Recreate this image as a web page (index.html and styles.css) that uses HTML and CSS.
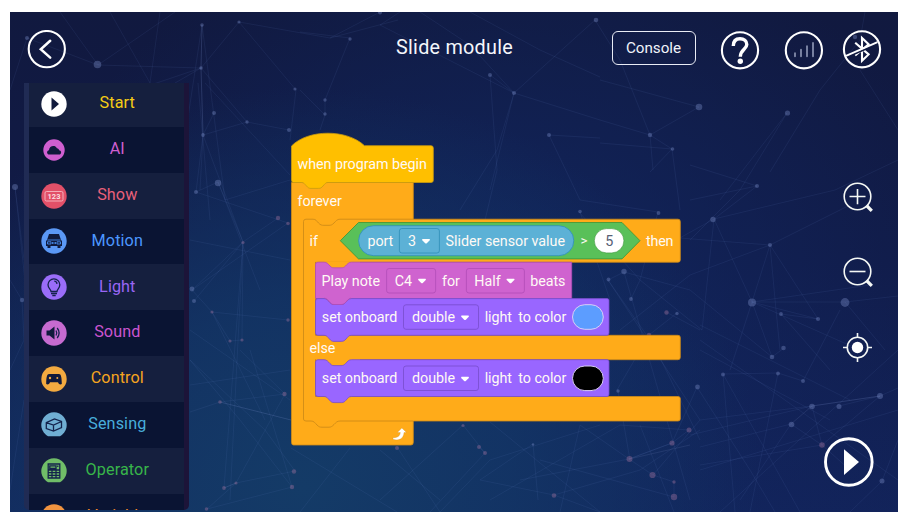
FILE: index.html
```html
<!DOCTYPE html>
<html lang="en">
<head>
<meta charset="utf-8">
<title>Slide module</title>
<link rel="stylesheet" href="styles.css">
</head>
<body>
<div class="app">
  <svg class="mesh" viewBox="10 12 888 500" aria-hidden="true">
    <g class="mesh-lines">
      <path d="M202 25L201 68L203 135L200 190M202 25L180 170M202 25L225 200M239 22L201 68L98 65M239 22L330 38L398 20M239 22L296 90L290 140M201 68L130 92M201 68L175 83M201 68L247 122L289 130M214 113L203 135L247 122M203 135L196 192M196 192L218 182L243 242L192 290M196 192L288 223M203 135L243 242L278 218M218 182L260 290M192 290L212 312L288 320M192 290L288 223M194 301L243 242M212 312L230 341L242 340M212 312L265 420M242 340L243 242M220 402L291 420M220 402L190 412M220 402L285 394L240 350M285 394L236 483M224 488L243 242M224 488L236 483L295 471L265 430L190 360M207 509L236 483M207 509L292 487L240 420L190 360M292 487L250 350M190 385L290 370M243 242L230 500M190 330L290 400M225 200L290 180M190 240L290 260M205 83L290 175M198 83L210 220"/>
      <path d="M330 38L380 12M350 38L325 100L325 115L300 90M350 38L300 32M325 115L320 130M380 25L514 93L600 120M400 12L380 25M420 12L470 45L514 93L490 190M490 75L514 93L595 20M490 75L497 170L485 220M470 12L540 50L600 77M549 135L600 138M549 135L580 200L658 212M514 93L497 150L460 210M595 20L620 60L650 135L699 107L600 80M650 135L600 120M650 135L672 149L650 172M650 135L653 170M672 149L600 143M672 149L680 210M787 113L740 190L690 240M787 113L720 200M860 40L820 90L770 172M860 70L898 130M860 40L865 12"/>
      <path d="M757 186L690 165M757 186L714 219L702 330M757 186L690 200M714 219L752 302L772 357L784 348M714 219L640 260M714 219L835 190L898 160M770 245L752 302L730 370M770 245L680 238M770 245L690 275L620 330M770 245L776 310L780 350M770 245L818 319M770 245L850 205M752 302L845 302L898 296M752 302L818 319L781 314L830 370M752 302L860 350M752 302L870 285M845 302L885 350M702 330L640 280L579 212M658 212L640 280L631 299M624 272L608 280L650 340M624 272L690 290L772 357M677 313L649 335L617 390L618 391M666 312L700 330M580 212L610 300M608 280L700 420M624 272L690 500M649 335L700 440M700 325L850 400M700 340L898 480M700 350L830 420"/>
      <path d="M723 374L778 373L803 381L840 310M697 387L672 443L629 459M689 430L672 443L629 459L520 480M629 459L653 475L674 482L674 497M674 497L540 460M653 475L700 420L812 406L880 396M812 406L690 435M839 406L880 396L898 388M791 424L700 447M791 424L822 445L850 470M791 424L740 500M880 396L822 445L700 465M812 406L822 445M554 495L480 480L533 444M554 495L640 470L700 430M554 495L600 512M533 444L538 500M490 422L600 512M629 459L580 425L560 512M689 430L620 425L490 500M600 425L490 460M618 391L630 460M640 425L674 512M723 374L735 512M697 387L750 470L775 512M723 374L800 512M778 373L750 512M463 425L380 500M479 447L485 453M463 425L485 453L430 512M397 447L440 512L490 460M350 448L300 512M380 450L440 500M291 448L397 512M882 481L850 512M882 481L898 440M720 512L898 350M700 470L898 410"/>
      <path d="M27 38L10 90M27 38L98 65L60 12M98 65L175 12M15 187L27 300M22 300L10 280M22 300L24 340L10 370M15 187L24 260M110 12L150 83L160 12M10 490L24 400"/>
    </g>
    <g class="mesh-hot">
      <path d="M220 402L291 420M224 488L236 483M629 459L690 445M203 135L201 68L202 25M791 424L812 406L880 396"/>
    </g>
    <g class="mesh-dots">
      <circle cx="97.500" cy="64.500" r="3.800"/><circle cx="27" cy="38" r="2"/><circle cx="202" cy="25" r="1.800"/><circle cx="239" cy="22" r="1.600"/><circle cx="201" cy="68" r="1.800"/><circle cx="295" cy="89" r="1.600"/><circle cx="214" cy="113" r="2"/><circle cx="247" cy="122" r="1.700"/><circle cx="203" cy="135" r="1.900"/><circle cx="289" cy="130" r="2"/>
      <circle cx="15" cy="187" r="3"/><circle cx="218" cy="183" r="3.200"/><circle cx="196" cy="192" r="2"/><circle cx="192" cy="289" r="2.400"/><circle cx="194" cy="301" r="2"/><circle cx="22" cy="300" r="2.200"/><circle cx="380" cy="12.500" r="2"/><circle cx="350" cy="39" r="1.700"/><circle cx="325" cy="100" r="1.700"/><circle cx="325" cy="114" r="1.700"/><circle cx="596" cy="20" r="2.300"/><circle cx="490" cy="75" r="2"/><circle cx="514" cy="93" r="2.100"/><circle cx="549" cy="135" r="2"/><circle cx="699" cy="107" r="3.300"/><circle cx="650" cy="135" r="2.200"/><circle cx="672.500" cy="149" r="1.800"/><circle cx="787.500" cy="113" r="2.600"/><circle cx="855" cy="37" r="2.200"/><circle cx="580" cy="211.500" r="1.800"/><circle cx="658.500" cy="213" r="1.900"/><circle cx="757" cy="186" r="2"/><circle cx="713" cy="219.500" r="2.700"/><circle cx="770" cy="245" r="2.100"/><circle cx="752" cy="302.500" r="4"/><circle cx="845" cy="302.500" r="4.400"/><circle cx="781" cy="314" r="1.900"/><circle cx="818" cy="319" r="2.100"/><circle cx="783.500" cy="348" r="2.300"/><circle cx="772" cy="357" r="2.300"/><circle cx="624" cy="271.500" r="2.700"/><circle cx="608.500" cy="279.500" r="1.900"/><circle cx="631" cy="299" r="1.900"/><circle cx="677" cy="313.500" r="1.700"/><circle cx="697.500" cy="387" r="2.400"/><circle cx="618" cy="391" r="1.700"/><circle cx="723" cy="374.500" r="2"/><circle cx="778" cy="373.500" r="1.900"/><circle cx="803" cy="381" r="2"/><circle cx="812" cy="406.500" r="2.800"/><circle cx="839" cy="406.500" r="2.500"/><circle cx="880" cy="396" r="3"/><circle cx="791.500" cy="424.500" r="2.800"/><circle cx="882" cy="481" r="2.500"/><circle cx="533" cy="444.500" r="1.300"/>
    </g>
    <g class="mesh-dots mesh-dots--rose">
      <circle cx="278" cy="218" r="2.200"/><circle cx="288" cy="223.500" r="1.800"/><circle cx="243" cy="242.500" r="1.600"/><circle cx="212" cy="312" r="1.600"/><circle cx="288" cy="320" r="1.700"/><circle cx="230" cy="341" r="1.600"/><circle cx="242" cy="340" r="1.600"/><circle cx="220" cy="402" r="1.800"/><circle cx="284.500" cy="394" r="2.200"/><circle cx="294" cy="471.500" r="2.200"/><circle cx="292" cy="487" r="2.200"/><circle cx="236" cy="483" r="1.600"/><circle cx="224" cy="488" r="1.900"/><circle cx="206.500" cy="509" r="1.800"/><circle cx="666.500" cy="312.500" r="2.200"/><circle cx="649" cy="335" r="2.200"/><circle cx="689" cy="430" r="2.500"/><circle cx="672" cy="443" r="2.600"/><circle cx="629.500" cy="459" r="3"/><circle cx="652.500" cy="475" r="3.100"/><circle cx="674" cy="482" r="1.700"/><circle cx="674" cy="497" r="3.200"/><circle cx="554" cy="495.500" r="2.300"/><circle cx="822" cy="445" r="2.800"/><circle cx="463" cy="425.500" r="1.600"/><circle cx="479" cy="447" r="2"/><circle cx="485" cy="453" r="2"/><circle cx="397" cy="448" r="2"/>
    </g>
  </svg>

  <header class="header">
    <svg class="round" viewBox="0 0 40 40"><circle class="ring" cx="19.800" cy="19.100" r="18.100"/><path class="chevron" d="M23.200 10.800L13.800 19.300L23.200 27.600"/></svg>
    <h1 class="title">Slide module</h1>
    <div class="actions">
      <button class="console">Console</button>
      <svg class="round help" viewBox="0 0 40 40"><circle class="ring" cx="20" cy="20.300" r="18.100"/><path class="question" d="M13.300 16C13.300 10.900 16.100 8.700 20 8.700C24 8.700 26.800 11 26.800 14.500C26.800 19.300 20.300 19.500 20.300 26.800"/><circle class="solid" cx="20.300" cy="31.300" r="2.700"/></svg>
      <svg class="round signal" viewBox="0 0 40 40"><circle class="ring" cx="19.900" cy="20.300" r="18.100"/><path class="bars" d="M11 23.300V26.200M17 19.700V26.200M23 16.200V26.200M29 12.900V26.200"/></svg>
      <svg class="round bluetooth" viewBox="0 0 40 40"><circle class="ring" cx="20" cy="19.300" r="18.100"/><path class="rune" d="M13.200 12.800L26.600 24.400L20 30.800V8L26.600 14.200L13.200 25.500"/><path class="slash-gap" d="M5 27.200L36 13.700"/><path class="slash" d="M4 25.900L35.500 12.200"/></svg>
    </div>
  </header>

  <nav class="sidebar">
    <ul class="categories">
      <li class="category start"><svg viewBox="0 0 26 26"><circle cx="13" cy="13" r="12.700"/><path class="ink" d="M10.500 6.500L18 13L10.500 19.500Z"/></svg><span>Start</span></li>
      <li class="category ai"><svg viewBox="0 0 26 26"><circle cx="13" cy="13" r="10.700"/><path class="ink" d="M8.500 17.500C5.500 17.500 5.200 13.800 8 13.200C8 9 14 7.500 15.900 11.200C17.300 11.200 18 12.200 18 13.200C21 13.500 20.700 17.500 18 17.500Z"/></svg><span>AI</span></li>
      <li class="category show"><svg viewBox="0 0 26 26"><circle cx="13" cy="13" r="12.700"/><rect class="pale-line" x="4" y="8.500" width="18" height="9.500" rx="1.500"/><text class="digits" x="13" y="15.800">123</text></svg><span>Show</span></li>
      <li class="category motion"><svg viewBox="0 0 26 26"><circle cx="13" cy="13" r="12.700"/><path class="ink" d="M8 6H18L20 12L21 13V18H19.500V20H16.500V18H9.500V20H6.500V18H5V13L6 12Z"/><path class="tint-line" d="M6.500 12H19.500M6.500 13.800H10V16H6.500ZM16 13.800H19.500V16H16ZM11.500 14V16M13 14V16M14.500 14V16"/></svg><span>Motion</span></li>
      <li class="category light"><svg viewBox="0 0 26 26"><circle cx="13" cy="13" r="12.700"/><path class="ink-line" d="M10 17.500C10 15.500 7 14.500 7 10.800A5.900 5.900 0 0 1 18.800 10.800C18.800 14.500 16 15.500 16 17.500ZM10 19.500H16M11.300 21.500H14.700M13.300 7.200C14.800 7.300 15.800 8.400 16 9.800"/></svg><span>Light</span></li>
      <li class="category sound"><svg viewBox="0 0 26 26"><circle cx="13" cy="13" r="12.700"/><path class="ink" d="M5.500 10.500H8.500L13.500 6.500V19.500L8.500 15.500H5.500Z"/><path class="ink-line" d="M15 10.500Q16.500 13 15 15.500M16.200 8Q20 13 16.200 18"/></svg><span>Sound</span></li>
      <li class="category control"><svg viewBox="0 0 26 26"><circle cx="13" cy="13" r="12.700"/><path class="ink" d="M8 8H18C20 8 20.800 11 20.800 18C19.500 19 17.800 18.500 17 16.300H9C8.200 18.500 6.500 19 5.200 18C5.200 11 6 8 8 8Z"/><circle cx="9" cy="12" r="1.200"/><circle cx="16.300" cy="12" r="1"/></svg><span>Control</span></li>
      <li class="category sensing"><svg viewBox="0 0 26 26"><path d="M7 24.200A12.700 12.700 0 1 1 19 24.200Z"/><path class="ink-line" d="M5.300 10.700L13.500 7L20.500 9.500V15.500L12.500 19L5.300 16.500ZM5.300 10.700L12.500 13L20.500 9.500M12.500 13V19"/></svg><span>Sensing</span></li>
      <li class="category operator"><svg viewBox="0 0 26 26"><path d="M7 24.200A12.700 12.700 0 1 1 19 24.200Z"/><path class="ink-line" d="M7.200 6H18.800V20H7.200ZM8.800 7.800H15V10.500H8.800ZM16.800 7.500V9M7.200 12H18.800M7.200 14.700H18.800M7.200 17.400H18.800M11 12V20M15 12V20"/></svg><span>Operator</span></li>
      <li class="category variable"><svg viewBox="0 0 26 26"><circle cx="13" cy="13" r="12.700"/></svg><span>Variable</span></li>
    </ul>
  </nav>

  <main class="workspace">
    <svg class="script" viewBox="190 83 620 429">
      <defs>
        <path id="caret" d="M0.300 0H7.300Q8.300 0.500 7.300 1.500L4.600 4.200Q3.800 4.900 3 4.200L0.300 1.500Q-0.600 0.500 0.300 0Z"/>
      </defs>
      <path class="block control-block" d="M291.500 182.500H413.300V219.200H678Q680.300 219.200 680.300 221.500V260Q680.300 262.200 678 262.200H315.500V335.300H678Q680.300 335.300 680.300 337.500V357.500Q680.300 359.700 678 359.700H315.500V396.500H678Q680.300 396.500 680.300 398.500V419Q680.300 421 678 421H413.300V442.500Q413.300 445 411 445H293.500Q291.500 445 291.500 442.500Z"/>
      <path class="control-socket" d="M316 261.500H360V269H316ZM316 359H360V367H316Z"/>
      <path class="seam" d="M413 219.200H340C337 219.200 336 221 334 223C332 225 331 225.300 329 225.300H324C321.500 225.300 320.500 225 318.500 223C316.500 221 316 219.200 313 219.200H306Q303.500 219.200 303.500 221.500V419Q303.500 421 306 421H311C314 421 315 423 317 425C319 427 320 427.200 322 427.200H329C331 427.200 332 426.500 334 424.500C336 422.500 337 421 340 421H413"/>
      <path class="block start-block" d="M291.500 146C308 129 347 129 364.500 145.700H431Q433.300 145.700 433.300 148V180.500Q433.300 182.500 431 182.500H328C325.500 182.500 325 184 323 186C321.500 187.800 320.500 188.400 318.500 188.400H311C309 188.400 308 187.800 306.500 186C304.500 184 304 182.500 301.500 182.500H293.500Q291.500 182.500 291.500 180Z"/>
      <path class="block sound-block" d="M318 262.200H324C327 262.200 328 264 330 266C331.500 267.500 332 267.800 334 267.800H341C343 267.800 344 267.500 345.500 266C347.500 264 348.500 262.200 351.500 262.200H571.700V298.600H315.500V264.500Q315.500 262.200 318 262.200Z"/>
      <path class="block light-block" d="M318 298.600H324C327 298.600 328 300.500 330 302.500C331.500 304 332 304.500 334 304.500H341C343 304.500 344 304 345.500 302.500C347.500 300.500 348.500 298.600 351.500 298.600H607Q609 298.600 609 300.500V333Q609 335.300 607 335.300H351.500C348.500 335.300 348 337 346 339C344.500 340.700 343.500 341.400 341.500 341.400H334C332 341.400 331 340.700 329.500 339C327.500 337 327 335.300 324 335.300H318Q315.500 335.300 315.500 333V301Q315.500 298.600 318 298.600Z"/>
      <path class="block sound-block" d="M324.500 298.100C327 298.600 328 300.500 330 302.500C331.500 304 332 304.500 334 304.500H341C343 304.500 344 304 345.500 302.500C347.500 300.500 348.500 298.600 351 298.100"/>
      <path class="block light-block" d="M318 359.700H324C327 359.700 328 361.600 330 363.600C331.500 365.100 332 365.600 334 365.600H341C343 365.600 344 365.100 345.500 363.600C347.500 361.600 348.500 359.700 351.500 359.700H607Q609 359.700 609 361.600V394.300Q609 396.500 607 396.500H351.500C348.500 396.500 348 398.200 346 400.200C344.500 401.900 343.500 402.600 341.500 402.600H334C332 402.600 331 401.900 329.500 400.200C327.500 398.200 327 396.500 324 396.500H318Q315.500 396.500 315.500 394.300V362Q315.500 359.700 318 359.700Z"/>

      <path class="block operator-block" d="M358.500 222.500H622L640 240.700L622 258.900H358.500L340.300 240.700Z"/>
      <rect class="block sensing-block" x="358.600" y="225.700" width="215.200" height="30" rx="15"/>
      <rect class="field sensing-block" x="399.400" y="228.500" width="40" height="24.500" rx="2.500"/>
      <rect class="number" x="594.300" y="228.600" width="29.600" height="24.300" rx="12.100"/>
      <rect class="field sound-block" x="386.600" y="268.500" width="49" height="24.500" rx="2.500"/>
      <rect class="field sound-block" x="466.400" y="268.500" width="58" height="24.500" rx="2.500"/>
      <rect class="field light-block" x="403.500" y="304.800" width="75" height="24.500" rx="2.500"/>
      <rect class="field light-block" x="403.500" y="366" width="75" height="24.500" rx="2.500"/>
      <rect class="swatch swatch--blue" x="572.500" y="304.700" width="30.800" height="24.600" rx="12.300"/>
      <rect class="swatch swatch--black" x="572.500" y="366" width="30.800" height="24.600" rx="12.300"/>

      <g class="carets">
        <use href="#caret" x="422.200" y="239"/><use href="#caret" x="418.200" y="278.800"/><use href="#caret" x="506.700" y="278.800"/><use href="#caret" x="461.200" y="315.500"/><use href="#caret" x="461.200" y="376.800"/>
      </g>
      <path class="repeat" d="M393 437.700C397.500 437.700 400 436.200 400.300 432.500H397.300L401.900 428L406.500 432.500H404C403.700 438.300 399.500 441.200 393 439.300Z"/>

      <g class="labels">
        <text x="297.500" y="169.300" textLength="129.300">when program begin</text>
        <text x="297.500" y="206.300" textLength="44.300">forever</text>
        <text x="309.600" y="245.600">if</text>
        <text x="367.600" y="245.600" textLength="25.700">port</text>
        <text x="408" y="245.600">3</text>
        <text x="445.600" y="245.600" textLength="119.400">Slider sensor value</text>
        <text class="sign" x="580.500" y="245.200">&gt;</text>
        <text class="value" x="605.200" y="245.800">5</text>
        <text x="646" y="245.600" textLength="27.500">then</text>
        <text x="321.500" y="285.700" textLength="58.500">Play note</text>
        <text x="394.800" y="285.700">C4</text>
        <text x="442" y="285.700">for</text>
        <text x="474.300" y="285.700">Half</text>
        <text x="530.200" y="285.700" textLength="35.300">beats</text>
        <text x="321.800" y="322.100" textLength="75.500">set onboard</text>
        <text x="412" y="322.100" textLength="43">double</text>
        <text x="484.700" y="322.100" textLength="27.300">light</text>
        <text x="518.300" y="322.100" textLength="48">to color</text>
        <text x="309.600" y="353" textLength="25.800">else</text>
        <text x="321.800" y="383.300" textLength="75.500">set onboard</text>
        <text x="412" y="383.300" textLength="43">double</text>
        <text x="484.700" y="383.300" textLength="27.300">light</text>
        <text x="518.300" y="383.300" textLength="48">to color</text>
      </g>
    </svg>
  </main>

  <aside class="tools">
    <svg class="tool" viewBox="0 0 32 32"><circle cx="15.500" cy="15.500" r="13.300"/><path d="M15.500 8V23.300M7.500 15.500H23.500"/><path class="handle" d="M24.500 24.500L29.800 29.800"/></svg>
    <svg class="tool" viewBox="0 0 32 32"><circle cx="15.500" cy="15.500" r="13.300"/><path d="M7.500 15.500H23.500"/><path class="handle" d="M24.500 24.500L29.800 29.800"/></svg>
    <svg class="tool" viewBox="0 0 32 32"><circle cx="15.500" cy="15.500" r="10.200"/><circle class="core" cx="15.500" cy="15.500" r="5.700"/><path d="M15.500 1V5.500M15.500 25.500V30M1 15.500H5.500M25.500 15.500H30"/></svg>
    <svg class="run" viewBox="0 0 50 50"><circle cx="24.800" cy="25" r="23.300"/><path d="M20 12.200L35 25L20 38Z"/></svg>
  </aside>
</div>
</body>
</html>
```
FILE: styles.css
```css
* {
  box-sizing: border-box;
}

body {
  margin: 0;
  padding: 12px 1px 3px 10px;
  background: #fff;
  font-family: Roboto, "Liberation Sans", sans-serif;
  overflow: hidden;
}

.app {
  position: relative;
  isolation: isolate;
  display: grid;
  grid-template-columns: 180px 620px 88px;
  grid-template-rows: 71px 429px;
  width: 888px;
  height: 500px;
  overflow: hidden;
  background:
    radial-gradient(ellipse 460px 400px at 33% 95%, #143b67 0%, rgba(19, 55, 102, 0.8) 45%, rgba(18, 42, 92, 0) 100%),
    radial-gradient(ellipse 480px 400px at 55% 60%, rgba(17, 40, 98, 0.85) 0%, rgba(17, 36, 90, 0) 100%),
    linear-gradient(#11193f 0%, #111b48 50%, #12235a 100%);
}

.mesh {
  position: absolute;
  inset: 0;
  z-index: -1;
  width: 888px;
  height: 500px;
}

.mesh-lines {
  fill: none;
  stroke: #6b8ad0;
  stroke-opacity: 0.1;
  stroke-width: 1;
}

.mesh-hot {
  fill: none;
  stroke: #8fa5dc;
  stroke-opacity: 0.13;
}

.mesh-dots {
  fill: #7c8fc8;
  fill-opacity: 0.38;
}

.mesh-dots--rose {
  fill: #a0709c;
  fill-opacity: 0.42;
}

.header {
  grid-column: 1 / -1;
  display: grid;
  grid-template-columns: 1fr auto 1fr;
  align-items: center;
  padding: 5px 16px 0 17px;
}

.title {
  margin: 0 0 5px;
  color: #f4f6fb;
  font-size: 19.800px;
  font-weight: 400;
  letter-spacing: 0.250px;
}

.actions {
  display: flex;
  justify-content: flex-end;
  align-items: center;
}

.console {
  width: 84px;
  height: 34px;
  margin: 0 24.500px 4px 0;
  padding: 0;
  border: 1px solid #e9ecf5;
  border-radius: 6px;
  background: none;
  color: #f0f3fa;
  font: 400 15.200px Roboto, "Liberation Sans", sans-serif;
}

.round {
  flex: none;
  width: 40px;
  height: 40px;
  fill: none;
  stroke: #fff;
}

.help {
  margin-right: 23.500px;
}

.signal {
  margin-right: 18.500px;
}

.ring {
  stroke-width: 2.100;
}

.chevron {
  stroke-width: 2.500;
  stroke-linecap: round;
}

.question {
  stroke-width: 3.400;
}

.solid {
  fill: #fff;
  stroke: none;
}

.bars {
  stroke: #7780a0;
  stroke-width: 2;
  stroke-linecap: round;
}

.rune {
  stroke-width: 2.100;
}

.slash-gap {
  stroke: #11193f;
  stroke-width: 1.800;
}

.slash {
  stroke-width: 1.900;
}

.sidebar {
  width: 165px;
  height: 427px;
  margin-left: 14px;
  overflow: hidden;
  border-left: 5px solid #202b54;
  border-right: 5px solid #1c1439;
  border-radius: 0 0 5px 5px;
}

.categories {
  margin: -2px 0 0;
  padding: 0;
  list-style: none;
}

.category {
  display: grid;
  grid-template-columns: 26px 100px;
  align-items: center;
  height: 45.850px;
  padding-left: 12.300px;
  background: #0a1433;
  color: var(--tone);
}

.category:nth-child(odd) {
  background: #151f3e;
}

.category svg {
  width: 26px;
  height: 26px;
  fill: var(--disc, var(--tone));
}

.category span {
  margin-bottom: 2.400px;
  font-size: 16.200px;
  letter-spacing: 0.100px;
  text-align: center;
}

.category .ink {
  fill: #101a3c;
}

.category .ink-line {
  fill: none;
  stroke: #14234c;
  stroke-width: 1.300;
}

.category .pale-line {
  fill: none;
  stroke: #f6b9c2;
  stroke-width: 0.900;
}

.category .tint-line {
  fill: none;
  stroke: var(--tone);
  stroke-width: 0.800;
}

.digits {
  fill: #fbdde1;
  font-size: 7.500px;
  font-weight: 700;
  text-anchor: middle;
}

.start { --tone: #f5cc14; --disc: #fff; }
.ai { --tone: #cf5fd0; }
.show { --tone: #e9607a; --disc: #e25068; }
.motion { --tone: #4c97ff; --disc: #5b98f5; }
.light { --tone: #9966f5; --disc: #9a6df8; }
.sound { --tone: #cb55cf; --disc: #c66bd0; }
.control { --tone: #f5a51f; --disc: #f3aa40; }
.sensing { --tone: #48aedb; --disc: #70aed3; }
.operator { --tone: #38b54a; --disc: #70bd68; }
.variable { --tone: #f58a2a; --disc: #f29440; }

.script {
  display: block;
  width: 620px;
  height: 429px;
}

.block {
  stroke-width: 0.800;
}

.start-block { fill: #ffbf00; stroke: #c99a10; }
.control-block { fill: #ffab19; stroke: #cf8b17; }
.control-socket { fill: #ffab19; }
.sound-block { fill: #cf63cf; stroke: #b14cb8; }
.light-block { fill: #9966ff; stroke: #774dcb; }
.operator-block { fill: #59c059; stroke: #389438; }
.sensing-block { fill: #5cb1d6; stroke: #2e8eb8; }

.field {
  stroke-width: 0.800;
}

.seam {
  fill: none;
  stroke: #cf8b17;
  stroke-width: 0.900;
}

.number {
  fill: #fff;
  stroke: #389438;
  stroke-width: 0.600;
}

.swatch {
  stroke: #d9cdf6;
  stroke-width: 1;
}

.swatch--blue { fill: #5c9dff; }
.swatch--black { fill: #000; }

.carets,
.repeat {
  fill: #fff;
}

.repeat {
  stroke: #cf8b17;
  stroke-width: 0.300;
}

.labels {
  fill: #fffaf5;
  font-size: 14.300px;
}

.labels .value {
  fill: #575e75;
}

.labels .sign {
  font-size: 13.500px;
}

.tools {
  display: flex;
  flex-direction: column;
  align-items: center;
  padding: 98px 0 0 8px;
}

.tool {
  width: 32px;
  height: 32px;
  margin-bottom: 43.300px;
  fill: none;
  stroke: #f5f8f5;
  stroke-width: 1.600;
}

.tool .handle {
  stroke-width: 3.200;
}

.tool .core {
  fill: #fff;
  stroke: none;
}

.run {
  width: 50px;
  height: 50px;
  margin: 30px 18px 0 0;
  fill: none;
  stroke: #fff;
  stroke-width: 2.900;
}

.run path {
  fill: #fff;
  stroke: none;
}
```
